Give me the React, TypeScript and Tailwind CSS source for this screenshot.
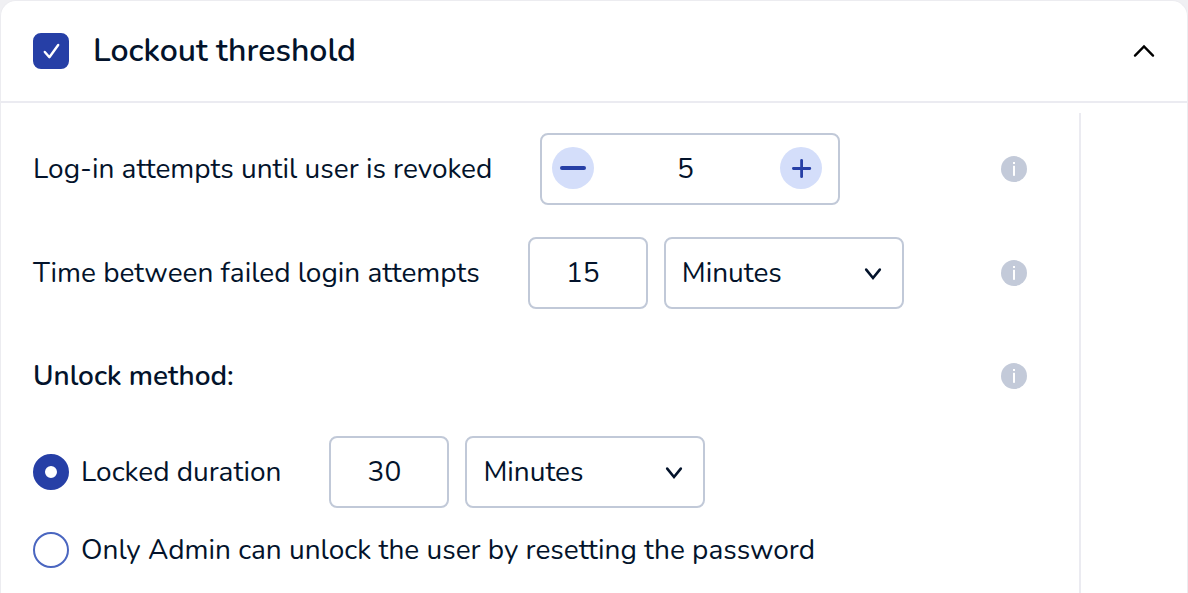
import { useState } from 'react';

const fontStack = "font-['Nunito','Lato','Noto_Sans',sans-serif]";

function InfoButton({ label }: { label: string }) {
  return (
    <button type="button" aria-label={label} className="ml-auto size-[26px] shrink-0 rounded-full">
      <svg viewBox="0 0 26 26" className="block size-[26px]" aria-hidden="true">
        <circle cx="13" cy="13" r="13" fill="#c3cad9" />
        <rect x="12" y="6" width="2" height="2" fill="#fff" />
        <rect x="12" y="9.8" width="2" height="10" fill="#fff" />
      </svg>
    </button>
  );
}

function Chevron({ up = false }: { up?: boolean }) {
  return up ? (
    <svg viewBox="0 0 24 24" className="block size-6" fill="none" stroke="#000" strokeWidth="2.4" strokeLinecap="round" strokeLinejoin="miter" aria-hidden="true">
      <path d="M3 16.6 12 7.4 21 16.6" />
    </svg>
  ) : (
    <svg viewBox="0 0 24 24" className="pointer-events-none col-start-1 row-start-1 mr-[19px] size-6 self-center justify-self-end" fill="none" stroke="#03132b" strokeWidth="2.6" strokeLinecap="round" strokeLinejoin="miter" aria-hidden="true">
      <path d="M5.2 8.6 12 17 18.8 8.6" />
    </svg>
  );
}

function Duration({ label, initial }: { label: string; initial: string }) {
  const [amount, setAmount] = useState(initial);
  return (
    <div className="flex gap-4">
      <input
        id={label.toLowerCase().replaceAll(' ', '-')}
        type="text"
        inputMode="numeric"
        aria-label={label}
        value={amount}
        onChange={(e) => setAmount(e.target.value)}
        className="h-[72px] w-[120px] rounded-lg border-2 border-[#c1c9d8] bg-white pr-2.5 text-center"
      />
      <div className="grid w-60">
        <select
          aria-label={`${label} unit`}
          defaultValue="Minutes"
          className="col-start-1 row-start-1 h-[72px] w-full appearance-none rounded-lg border-2 border-[#c1c9d8] bg-white px-4"
        >
          <option>Minutes</option>
          <option>Hours</option>
          <option>Days</option>
        </select>
        <Chevron />
      </div>
    </div>
  );
}

function Radio({ id, checked, onSelect }: { id: string; checked: boolean; onSelect: () => void }) {
  return (
    <input
      id={id}
      type="radio"
      name="unlock-method"
      checked={checked}
      onChange={onSelect}
      className="size-9 shrink-0 appearance-none rounded-full border-2 border-[#4a66c0] bg-white checked:border-[12px] checked:border-[#263fa6]"
    />
  );
}

export default function App() {
  const [enabled, setEnabled] = useState(true);
  const [open, setOpen] = useState(true);
  const [attempts, setAttempts] = useState(5);
  const [method, setMethod] = useState('duration');

  return (
    <main className={`flex min-h-screen flex-col bg-[#f0f0f3] text-[28px] leading-9 text-[#03132b] ${fontStack}`}>
      <section className="flex flex-1 flex-col rounded-t-2xl border border-b-0 border-[#ececf0] bg-white">
        <header className="flex h-[102px] items-center border-b-2 border-[#ebebf1] px-8">
          <div className="grid size-9 shrink-0">
            <input
              id="lockout"
              type="checkbox"
              checked={enabled}
              onChange={(e) => setEnabled(e.target.checked)}
              className="col-start-1 row-start-1 size-9 appearance-none rounded-lg border-2 border-[#263fa6] bg-white checked:bg-[#263fa6]"
            />
            <svg viewBox="0 0 36 36" className="pointer-events-none col-start-1 row-start-1 size-9" fill="none" stroke="#fff" strokeWidth="2.4" strokeLinecap="round" strokeLinejoin="round" aria-hidden="true">
              <path d="M11.8 19 16.4 24.2 25.2 12" />
            </svg>
          </div>
          <label htmlFor="lockout" className="ml-6 text-[32px] leading-10 font-semibold">
            Lockout threshold
          </label>
          <button type="button" aria-label="Toggle section" aria-expanded={open} onClick={() => setOpen(!open)} className="-mr-px ml-auto">
            <Chevron up />
          </button>
        </header>

        {open && (
          <div className="flex flex-1 pt-2.5">
            <div className="flex flex-1 flex-col border-r-2 border-[#ebebf1] pt-5 pr-[52px] pb-6 pl-8">
              <div className="flex items-center">
                <label htmlFor="attempts" className="whitespace-nowrap">
                  Log-in attempts until user is revoked
                </label>
                <div className="ml-12 flex h-[72px] w-[300px] items-center rounded-lg border-2 border-[#c1c9d8] pr-4 pb-0.5 pl-2.5">
                  <button
                    type="button"
                    aria-label="Decrease attempts"
                    onClick={() => setAttempts(Math.max(1, attempts - 1))}
                    className="grid size-[42px] shrink-0 place-items-center rounded-full bg-[#d4defa]"
                  >
                    <svg viewBox="0 0 42 42" className="size-[42px]" fill="none" stroke="#263fa6" strokeWidth="4" strokeLinecap="round" aria-hidden="true">
                      <path d="M10 21H32" />
                    </svg>
                  </button>
                  <input
                    id="attempts"
                    type="text"
                    inputMode="numeric"
                    value={attempts}
                    onChange={(e) => setAttempts(Number(e.target.value) || 1)}
                    className="w-0 flex-1 bg-transparent pt-0.5 pr-1 text-center"
                  />
                  <button
                    type="button"
                    aria-label="Increase attempts"
                    onClick={() => setAttempts(attempts + 1)}
                    className="grid size-[42px] shrink-0 place-items-center rounded-full bg-[#d4defa]"
                  >
                    <svg viewBox="0 0 42 42" className="size-[42px]" fill="none" stroke="#263fa6" strokeWidth="2.8" strokeLinecap="round" aria-hidden="true">
                      <path d="M13.4 21.5H29.8M21.6 13.3V29.7" />
                    </svg>
                  </button>
                </div>
                <InfoButton label="About log-in attempts" />
              </div>

              <div className="mt-8 flex items-center">
                <label htmlFor="time-between-attempts" className="mr-12 whitespace-nowrap">
                  Time between failed login attempts
                </label>
                <Duration label="Time between attempts" initial="15" />
                <InfoButton label="About time between attempts" />
              </div>

              <div className="mt-8 flex h-[70px] items-center">
                <h2 className="font-semibold">Unlock method:</h2>
                <InfoButton label="About unlock method" />
              </div>

              <div className="mt-[25px] flex items-center">
                <Radio id="duration" checked={method === 'duration'} onSelect={() => setMethod('duration')} />
                <label htmlFor="duration" className="mr-12 ml-3 whitespace-nowrap">
                  Locked duration
                </label>
                <Duration label="Lock length" initial="30" />
              </div>

              <div className="mt-6 flex items-center">
                <Radio id="admin" checked={method === 'admin'} onSelect={() => setMethod('admin')} />
                <label htmlFor="admin" className="ml-3">
                  Only Admin can unlock the user by resetting the password
                </label>
              </div>
            </div>
            <div className="w-[106px] shrink-0" />
          </div>
        )}
      </section>
    </main>
  );
}
